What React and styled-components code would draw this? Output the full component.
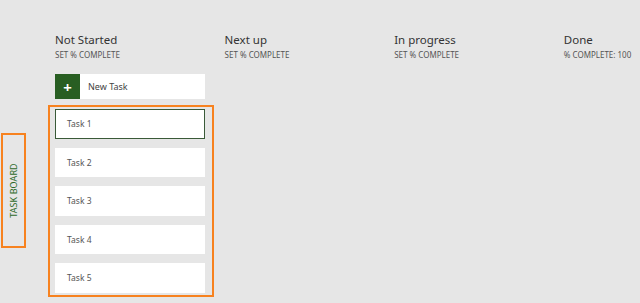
import styled, { createGlobalStyle } from 'styled-components';

const GlobalStyle = createGlobalStyle`
  html, body {
    margin: 0;
    padding: 0;
    background: #e6e6e6;
    font-family: "Noto Sans", "Open Sans", sans-serif;
  }
`;

const Page = styled.div`
  display: flex;
  width: 640px;
  height: 303px;
  background: #e6e6e6;
  overflow: hidden;
`;

const SideTab = styled.div`
  display: flex;
  align-items: center;
  justify-content: center;
  box-sizing: border-box;
  width: 25px;
  height: 115px;
  margin: 133px 0 0 1px;
  border: 2px solid #f7821f;
`;

const SideLabel = styled.span`
  transform: rotate(-90deg);
  white-space: nowrap;
  font-size: 9px;
  color: #2e6b2a;
  letter-spacing: 0.1px;
`;

const Board = styled.div`
  display: flex;
  gap: 19.6px;
  margin-left: 29px;
  padding-top: 32px;
`;

const Column = styled.div`
  display: flex;
  flex-direction: column;
  width: 150px;
`;

const ColumnTitle = styled.h2`
  margin: 0;
  font-size: 11.5px;
  font-weight: 400;
  line-height: 15px;
  color: #333;
`;

const ColumnStatus = styled.div`
  margin-top: 3px;
  font-size: 8px;
  line-height: 10px;
  color: #555;
`;

const NewTaskButton = styled.button`
  display: flex;
  align-items: center;
  width: 150px;
  height: 25px;
  margin-top: 14px;
  padding: 0;
  border: none;
  background: #fff;
  font-family: inherit;
  font-size: 9px;
  color: #444;
  cursor: pointer;
`;

const PlusBox = styled.span`
  display: flex;
  align-items: center;
  justify-content: center;
  width: 25px;
  height: 25px;
  margin-right: 8px;
  background: #285e22;
  color: #fff;
  font-size: 15px;
  font-weight: 700;
`;

const TaskList = styled.div`
  display: flex;
  flex-direction: column;
  gap: 9px;
  width: 166px;
  margin: 6px 0 0 -7px;
  padding: 2px 5px 2px;
  box-sizing: border-box;
  border: 2px solid #f7821f;
`;

const TaskCard = styled.div`
  display: flex;
  align-items: center;
  box-sizing: border-box;
  width: 150px;
  height: 29.5px;
  padding-left: 12px;
  background: #fff;
  outline: ${p => (p.$selected ? '1.5px solid #3a5a38' : 'none')};
  outline-offset: -1.5px;
  font-size: 8.5px;
  color: #555;
`;

const columns = [
  { title: 'Not Started', status: 'SET % COMPLETE' },
  { title: 'Next up', status: 'SET % COMPLETE' },
  { title: 'In progress', status: 'SET % COMPLETE' },
  { title: 'Done', status: '% COMPLETE: 100' },
];

const tasks = ['Task 1', 'Task 2', 'Task 3', 'Task 4', 'Task 5'];

export default function App() {
  return (
    <>
      <GlobalStyle />
      <Page>
        <SideTab>
          <SideLabel>TASK BOARD</SideLabel>
        </SideTab>
        <Board>
          {columns.map((col, i) => (
            <Column key={col.title}>
              <ColumnTitle>{col.title}</ColumnTitle>
              <ColumnStatus>{col.status}</ColumnStatus>
              {i === 0 && (
                <>
                  <NewTaskButton>
                    <PlusBox>+</PlusBox>
                    New Task
                  </NewTaskButton>
                  <TaskList>
                    {tasks.map((t, j) => (
                      <TaskCard key={t} $selected={j === 0}>{t}</TaskCard>
                    ))}
                  </TaskList>
                </>
              )}
            </Column>
          ))}
        </Board>
      </Page>
    </>
  );
}
